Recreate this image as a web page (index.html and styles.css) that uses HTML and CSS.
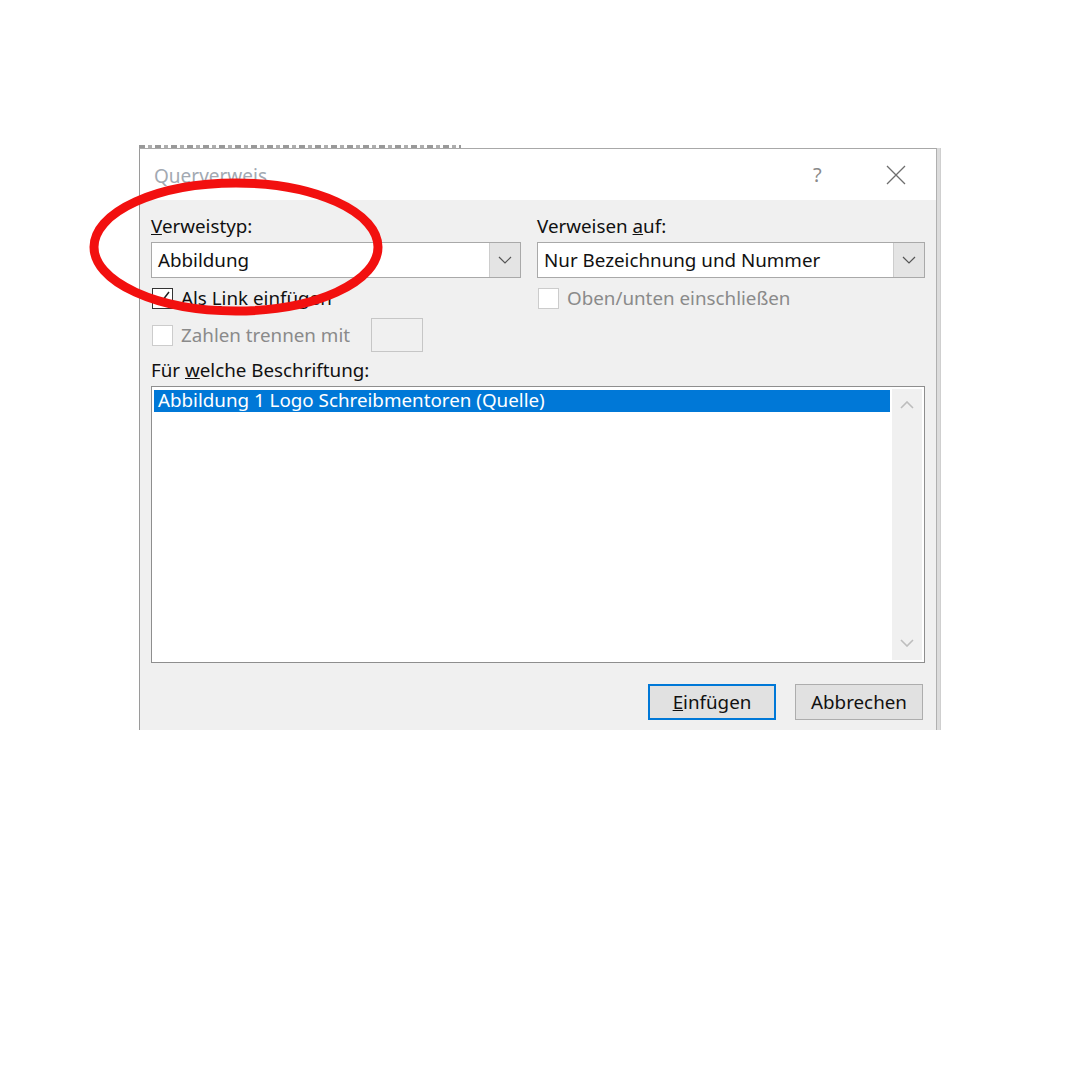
FILE: index.html
```html
<!DOCTYPE html>
<html lang="de">
<head>
<meta charset="utf-8">
<title>Querverweis</title>
<link rel="stylesheet" href="styles.css">
</head>
<body>
<div class="page">
  <div class="doc-frag"></div>
  <div class="dialog-wrap">
    <div class="dialog">
      <div class="titlebar">
        <span class="title">Querverweis</span>
        <span class="help">?</span>
        <span class="close">
          <svg width="20" height="20" viewBox="0 0 20 20"><path d="M1 1 L19 19 M19 1 L1 19" stroke="#6e6e6e" stroke-width="1.3" fill="none"/></svg>
        </span>
      </div>
      <div class="body">
        <div class="cols">
          <div class="col col-left">
            <div class="label"><u>V</u>erweistyp:</div>
            <div class="combo">
              <span class="combo-text">Abbildung</span>
              <span class="combo-btn"><svg width="14" height="8" viewBox="0 0 14 8"><path d="M1 1 L7 7 L13 1" stroke="#555" stroke-width="1.2" fill="none"/></svg></span>
            </div>
            <div class="check-row">
              <span class="cb cb-on"><svg width="19" height="19" viewBox="0 0 19 19"><path d="M3 9 L7.5 14 L16 3" stroke="#222" stroke-width="1.5" fill="none"/></svg></span>
              <span class="cb-label">Als <u>L</u>ink einfügen</span>
            </div>
            <div class="check-row row-sep">
              <span class="cb cb-off"></span>
              <span class="cb-label disabled">Zahlen trennen mit</span>
              <span class="small-input"></span>
            </div>
          </div>
          <div class="col col-right">
            <div class="label">Verweisen <u>a</u>uf:</div>
            <div class="combo">
              <span class="combo-text">Nur Bezeichnung und Nummer</span>
              <span class="combo-btn"><svg width="14" height="8" viewBox="0 0 14 8"><path d="M1 1 L7 7 L13 1" stroke="#555" stroke-width="1.2" fill="none"/></svg></span>
            </div>
            <div class="check-row">
              <span class="cb cb-off"></span>
              <span class="cb-label disabled">Oben/unten einschließen</span>
            </div>
          </div>
        </div>
        <div class="label label-list">Für <u>w</u>elche Beschriftung:</div>
        <div class="listbox">
          <div class="list-items">
            <div class="item selected">Abbildung 1 Logo Schreibmentoren (Quelle)</div>
          </div>
          <div class="scrollbar">
            <svg width="14" height="8" viewBox="0 0 14 8"><path d="M1 7 L7 1 L13 7" stroke="#bdbdbd" stroke-width="1.6" fill="none"/></svg>
            <svg width="14" height="8" viewBox="0 0 14 8"><path d="M1 1 L7 7 L13 1" stroke="#bdbdbd" stroke-width="1.6" fill="none"/></svg>
          </div>
        </div>
        <div class="buttons">
          <button class="btn btn-default"><u>E</u>infügen</button>
          <button class="btn">Abbrechen</button>
        </div>
      </div>
    </div>
    <div class="side-strip"></div>
  </div>
  <svg class="highlight" width="320" height="160" viewBox="0 0 320 160">
    <ellipse cx="160" cy="80" rx="142" ry="64" stroke="#f2100f" stroke-width="9" fill="none"/>
  </svg>
</div>
</body>
</html>
```

FILE: styles.css
```css
* { box-sizing: border-box; }
html, body { margin: 0; padding: 0; background: #ffffff; }
body {
  font-family: "Noto Sans", "Open Sans", sans-serif;
  font-size: 18.8px;
  color: #111111;
  width: 1080px;
  height: 1080px;
  overflow: hidden;
}
.page {
  position: relative;
  padding-top: 145px;
  padding-left: 139px;
}
.doc-frag {
  width: 322px;
  height: 3px;
  background: repeating-linear-gradient(90deg, #555 0 6px, transparent 6px 9px, #777 9px 13px, transparent 13px 16px);
  opacity: 0.6;
}
.dialog-wrap {
  display: flex;
}
.dialog {
  width: 798px;
  height: 582px;
  border-left: 1px solid #9a9a9a;
  border-top: 1px solid #a8a8a8;
  border-right: 1px solid #b0b0b0;
  display: flex;
  flex-direction: column;
}
.side-strip {
  width: 4px;
  height: 582px;
  background: #dcdcdc;
  border-right: 1px solid #cfcfcf;
}
.titlebar {
  height: 51px;
  background: #ffffff;
  display: flex;
  align-items: center;
  padding-left: 14px;
}
.title {
  flex: 1;
  color: #a2a9b2;
  font-size: 19px;
  padding-top: 2px;
}
.help {
  color: #8a8a8a;
  font-size: 20px;
  width: 20px;
  margin-right: 53px;
}
.close {
  display: flex;
  margin-right: 30px;
}
.body {
  flex: 1;
  background: #f0f0f0;
  padding: 15px 11px 10px 11px;
  display: flex;
  flex-direction: column;
}
.cols {
  display: flex;
  gap: 16px;
}
.col-left { width: 370px; }
.col-right { flex: 1; }
.label {
  height: 22px;
  line-height: 22px;
  margin-bottom: 5px;
}
.combo {
  height: 36px;
  background: #ffffff;
  border: 1px solid #a9a9a9;
  display: flex;
  align-items: center;
}
.combo-text {
  flex: 1;
  padding-left: 6px;
}
.combo-btn {
  width: 31px;
  height: 34px;
  background: #e4e4e4;
  border-left: 1px solid #cdcdcd;
  display: flex;
  align-items: center;
  justify-content: center;
}
.check-row {
  display: flex;
  align-items: center;
  height: 22px;
  margin-top: 9px;
}
.check-row.row-sep {
  height: 34px;
}
.cb {
  width: 21px;
  height: 21px;
  background: #ffffff;
  margin-left: 1px;
  margin-right: 8px;
  display: flex;
  align-items: center;
  justify-content: center;
}
.cb-on { border: 1px solid #333333; }
.cb-off { border: 1px solid #cccccc; }
.cb-label { line-height: 22px; white-space: nowrap; }
.disabled { color: #8a8a8a; }
.small-input {
  width: 52px;
  height: 34px;
  border: 1px solid #c6c6c6;
  background: #f0f0f0;
  margin-left: 21px;
}
.label-list {
  margin-top: 7px;
}
.listbox {
  height: 277px;
  border: 1px solid #8e8e8e;
  background: #ffffff;
  display: flex;
  padding: 3px 2px 2px 2px;
}
.list-items { flex: 1; }
.item {
  height: 22px;
  line-height: 21px;
  padding-left: 4px;
  white-space: nowrap;
}
.item.selected {
  background: #0078d7;
  color: #ffffff;
}
.scrollbar {
  width: 30px;
  margin-left: 2px;
  margin-top: -1px;
  background: #f0f0f0;
  display: flex;
  flex-direction: column;
  justify-content: space-between;
  align-items: center;
  padding: 12px 0 13px;
}
.buttons {
  display: flex;
  justify-content: flex-end;
  gap: 19px;
  margin-top: 21px;
  padding-right: 2px;
}
.btn {
  width: 128px;
  height: 36px;
  font-family: inherit;
  font-size: 18.8px;
  color: #111111;
  background: #e1e1e1;
  border: 1px solid #adadad;
  padding: 0;
}
.btn-default {
  border: 2px solid #0078d7;
}
.highlight {
  position: absolute;
  left: 76px;
  top: 167px;
}
```
